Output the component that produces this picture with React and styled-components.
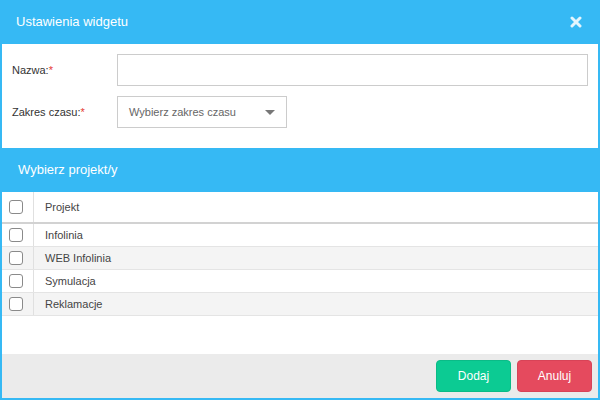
import React, { useState } from 'react';
import styled, { createGlobalStyle } from 'styled-components';

const GlobalStyle = createGlobalStyle`
  html, body { margin: 0; padding: 0; }
  body {
    font-family: "Liberation Sans", Arial, sans-serif;
    background: #fff;
  }
  * { box-sizing: border-box; }
`;

const projects = ['Infolinia', 'WEB Infolinia', 'Symulacja', 'Reklamacje'];

const App = () => {
  const [name, setName] = useState('');
  const [checked, setChecked] = useState({});

  return (
    <>
      <GlobalStyle />
      <Modal>
        <Header>
          <Title>Ustawienia widgetu</Title>
          <Close aria-label="close">
            <svg width="12" height="12" viewBox="0 0 12 12">
              <path d="M2 2 L10 10 M10 2 L2 10" stroke="#e3f5fd" strokeWidth="3" strokeLinecap="round" />
            </svg>
          </Close>
        </Header>
        <Form>
          <FieldRow>
            <Label>Nazwa:<Req>*</Req></Label>
            <TextInput value={name} onChange={(e) => setName(e.target.value)} />
          </FieldRow>
          <FieldRow>
            <Label>Zakres czasu:<Req>*</Req></Label>
            <Select>
              <span>Wybierz zakres czasu</span>
              <Caret />
            </Select>
          </FieldRow>
        </Form>
        <SectionHeader>Wybierz projekt/y</SectionHeader>
        <Table>
          <HeadRow>
            <CheckCell><Box /></CheckCell>
            <NameCell>Projekt</NameCell>
          </HeadRow>
          {projects.map((p, i) => (
            <Row key={p} odd={i % 2 === 1}>
              <CheckCell>
                <Box
                  checked={!!checked[p]}
                  onClick={() => setChecked({ ...checked, [p]: !checked[p] })}
                />
              </CheckCell>
              <NameCell>{p}</NameCell>
            </Row>
          ))}
        </Table>
        <Spacer />
        <Footer>
          <Button color="#0ccb93" border="#0bbb87">Dodaj</Button>
          <Button color="#e54a5e" border="#d84357">Anuluj</Button>
        </Footer>
      </Modal>
    </>
  );
};

export default App;

const Modal = styled.div`
  width: 600px;
  height: 400px;
  display: flex;
  flex-direction: column;
  border: 2px solid #36b9f4;
  border-top: none;
  background: #fff;
`;

const Header = styled.div`
  height: 44px;
  margin: 0 -2px;
  padding: 0 18px 0 16px;
  background: #36b9f4;
  display: flex;
  align-items: center;
  justify-content: space-between;
`;

const Title = styled.div`
  color: #fff;
  font-size: 13px;
  padding-bottom: 2px;
`;

const Close = styled.div`
  width: 12px;
  height: 12px;
  display: flex;
`;

const Form = styled.div`
  height: 104px;
  padding: 10px 10px 0 10px;
  display: flex;
  flex-direction: column;
  gap: 10px;
`;

const FieldRow = styled.div`
  display: flex;
  align-items: center;
  height: 32px;
`;

const Label = styled.div`
  width: 105px;
  font-size: 11px;
  color: #333;
`;

const Req = styled.span`
  color: #e53935;
`;

const TextInput = styled.input`
  width: 471px;
  height: 32px;
  border: 1px solid #cccccc;
  outline: none;
  font-family: inherit;
  font-size: 11px;
  padding: 0 10px;
`;

const Select = styled.div`
  width: 170px;
  height: 32px;
  border: 1px solid #cccccc;
  display: flex;
  align-items: center;
  justify-content: space-between;
  padding: 0 11px 0 11px;
  font-size: 11px;
  color: #666;
`;

const Caret = styled.span`
  width: 0;
  height: 0;
  border-left: 5px solid transparent;
  border-right: 5px solid transparent;
  border-top: 5px solid #777;
`;

const SectionHeader = styled.div`
  height: 44px;
  background: #36b9f4;
  color: #fff;
  font-size: 13px;
  display: flex;
  align-items: center;
  padding-left: 16px;
  padding-bottom: 2px;
`;

const Table = styled.div`
  display: flex;
  flex-direction: column;
`;

const HeadRow = styled.div`
  display: flex;
  height: 32px;
  border-bottom: 2px solid #d2d2d2;
`;

const Row = styled.div`
  display: flex;
  height: 23px;
  background: ${(p) => (p.odd ? '#f4f4f4' : '#fff')};
  border-bottom: 1px solid #e4e4e4;
`;

const CheckCell = styled.div`
  width: 32px;
  border-right: 1px solid #e0e0e0;
  display: flex;
  align-items: center;
  padding-left: 7px;
`;

const Box = styled.div`
  width: 14px;
  height: 14px;
  border: 1px solid #8a8a8a;
  border-radius: 3px;
  background: ${(p) => (p.checked ? '#36b9f4' : '#fff')};
  cursor: pointer;
`;

const NameCell = styled.div`
  display: flex;
  align-items: center;
  padding-left: 11px;
  font-size: 11px;
  color: #444;
`;

const Spacer = styled.div`
  flex: 1;
`;

const Footer = styled.div`
  height: 44px;
  background: #ebebeb;
  display: flex;
  justify-content: flex-end;
  align-items: center;
  gap: 6px;
  padding: 0 6px 0 0;
`;

const Button = styled.button`
  width: 75px;
  height: 32px;
  border-radius: 4px;
  border: 1px solid ${(p) => p.border};
  background: ${(p) => p.color};
  color: #fff;
  font-family: inherit;
  font-size: 12px;
  cursor: pointer;
`;
